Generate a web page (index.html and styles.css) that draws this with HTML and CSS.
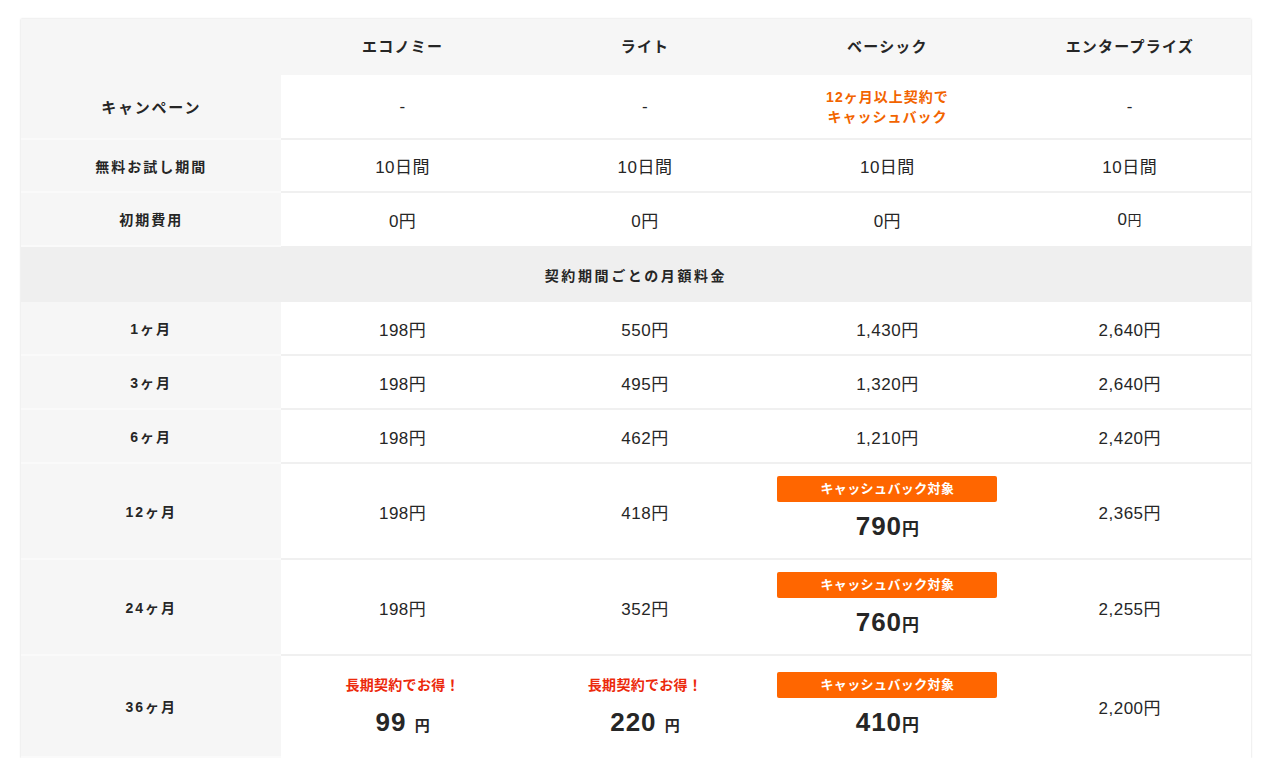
FILE: index.html
```html
<!DOCTYPE html>
<html lang="ja">
<head>
<meta charset="utf-8">
<title>料金表</title>
<link rel="stylesheet" href="styles.css">
</head>
<body>
<div class="wrap">
<table class="price-table">
  <colgroup>
    <col class="col-label">
    <col class="col-plan">
    <col class="col-plan">
    <col class="col-plan">
    <col class="col-plan">
  </colgroup>
  <thead>
    <tr class="row-head">
      <th class="label"></th>
      <th>エコノミー</th>
      <th>ライト</th>
      <th>ベーシック</th>
      <th>エンタープライズ</th>
    </tr>
  </thead>
  <tbody>
    <tr class="row-campaign">
      <th class="label">キャンペーン</th>
      <td>-</td>
      <td>-</td>
      <td><span class="campaign">12ヶ月以上契約で<br>キャッシュバック</span></td>
      <td>-</td>
    </tr>
    <tr class="row-s1">
      <th class="label small">無料お試し期間</th>
      <td>10日間</td>
      <td>10日間</td>
      <td>10日間</td>
      <td>10日間</td>
    </tr>
    <tr class="row-s2">
      <th class="label small">初期費用</th>
      <td>0円</td>
      <td>0円</td>
      <td>0円</td>
      <td>0<span class="yen-s">円</span></td>
    </tr>
    <tr class="row-section">
      <th colspan="5">契約期間ごとの月額料金</th>
    </tr>
    <tr class="row-m">
      <th class="label small">1ヶ月</th>
      <td>198円</td>
      <td>550円</td>
      <td>1,430円</td>
      <td>2,640円</td>
    </tr>
    <tr class="row-m">
      <th class="label small">3ヶ月</th>
      <td>198円</td>
      <td>495円</td>
      <td>1,320円</td>
      <td>2,640円</td>
    </tr>
    <tr class="row-m">
      <th class="label small">6ヶ月</th>
      <td>198円</td>
      <td>462円</td>
      <td>1,210円</td>
      <td>2,420円</td>
    </tr>
    <tr class="row-l">
      <th class="label small">12ヶ月</th>
      <td>198円</td>
      <td>418円</td>
      <td><div class="badge">キャッシュバック対象</div><div class="big">790<span class="big-yen">円</span></div></td>
      <td>2,365円</td>
    </tr>
    <tr class="row-l">
      <th class="label small">24ヶ月</th>
      <td>198円</td>
      <td>352円</td>
      <td><div class="badge">キャッシュバック対象</div><div class="big">760<span class="big-yen">円</span></div></td>
      <td>2,255円</td>
    </tr>
    <tr class="row-xl">
      <th class="label small">36ヶ月</th>
      <td><div class="deal">長期契約でお得！</div><div class="big">99 <span class="big-yen sm">円</span></div></td>
      <td><div class="deal">長期契約でお得！</div><div class="big">220 <span class="big-yen sm">円</span></div></td>
      <td><div class="badge">キャッシュバック対象</div><div class="big">410<span class="big-yen">円</span></div></td>
      <td>2,200円</td>
    </tr>
  </tbody>
</table>
</div>
</body>
</html>
```

FILE: styles.css
```css
html, body {
  margin: 0;
  padding: 0;
  background: #ffffff;
}

body {
  font-family: "Liberation Sans", "Noto Sans CJK JP", sans-serif;
  color: #262626;
}

.wrap {
  padding: 19px 0 0 21px;
}

.price-table {
  width: 1230px;
  table-layout: fixed;
  border-collapse: collapse;
  box-shadow: 0 0 2px rgba(0, 0, 0, 0.18);
  background: #fff;
}

.col-label { width: 260px; }
.col-plan { width: 242px; }

.price-table th,
.price-table td {
  padding: 0;
  text-align: center;
  vertical-align: middle;
}

.price-table td {
  font-size: 17px;
  letter-spacing: 0.5px;
  border-bottom: 2px solid #f0f0f0;
  background: #fff;
}

.price-table th.label {
  background: #f6f6f6;
  border-bottom: 2px solid #fafafa;
  font-size: 15px;
  font-weight: bold;
  letter-spacing: 1.8px;
  color: #262626;
}

.price-table th.label.small {
  font-size: 14px;
  letter-spacing: 2px;
}

.row-head th {
  background: #f6f6f6;
  height: 53px;
  padding-bottom: 3px;
  font-size: 15px;
  font-weight: bold;
  letter-spacing: 1.2px;
  color: #262626;
  border-bottom: 0 !important;
}

.row-campaign th, .row-campaign td { height: 63px; }
.row-s1 th, .row-s1 td { height: 51px; }
.row-s2 th, .row-s2 td { height: 52px; border-bottom: 0; }

.row-section th {
  background: #efefef;
  height: 55px;
  font-size: 14px;
  font-weight: bold;
  letter-spacing: 2.6px;
  color: #262626;
}

.row-m th, .row-m td { height: 52px; }
.row-l th, .row-l td { height: 94px; }
.row-xl th, .row-xl td { height: 100px; border-bottom: 0; }

.yen-s { font-size: 14px; }

.campaign {
  display: inline-block;
  color: #f26400;
  font-size: 14px;
  font-weight: bold;
  line-height: 20px;
  letter-spacing: 1px;
  padding-top: 1px;
}

.badge {
  width: 220px;
  height: 26px;
  margin: 0 auto;
  background: #ff6600;
  border-radius: 2px;
  color: #fff;
  font-size: 13px;
  font-weight: bold;
  line-height: 26px;
  letter-spacing: 0.4px;
}

.deal {
  height: 26px;
  line-height: 26px;
  color: #ec2a0c;
  font-size: 14px;
  font-weight: bold;
  letter-spacing: 0.3px;
}

.big {
  margin-top: 4px;
  height: 40px;
  line-height: 40px;
  font-size: 26px;
  font-weight: bold;
  letter-spacing: 1px;
  color: #262626;
}

.big-yen {
  font-size: 17px;
  letter-spacing: 0;
}

.big-yen.sm {
  font-size: 15px;
}
```
